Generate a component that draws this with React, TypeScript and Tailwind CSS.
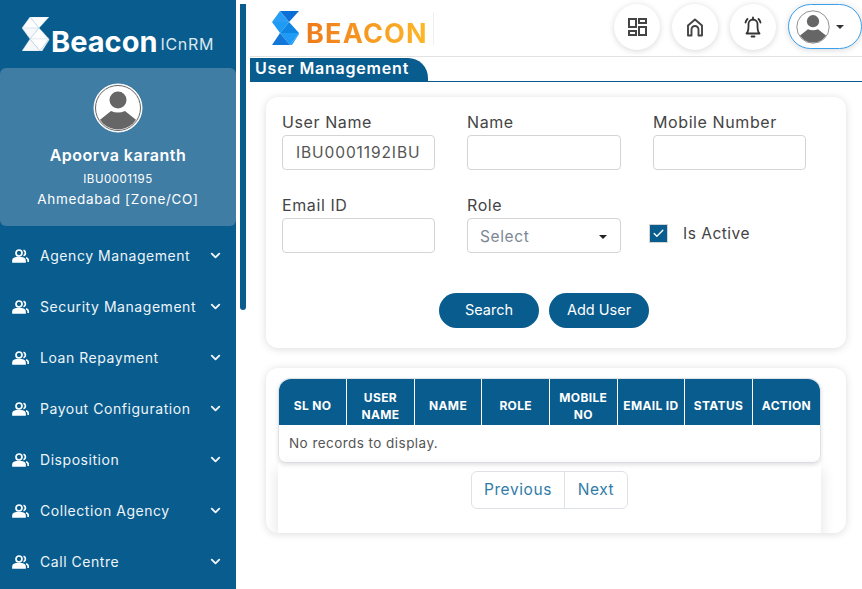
import React from 'react';
import { ChevronDown, Check } from 'lucide-react';

const menuItems = [
  'Agency Management',
  'Security Management',
  'Loan Repayment',
  'Payout Configuration',
  'Disposition',
  'Collection Agency',
  'Call Centre',
];

const columns = ['SL NO', 'USER NAME', 'NAME', 'ROLE', 'MOBILE NO', 'EMAIL ID', 'STATUS', 'ACTION'];

const Avatar = ({ size }: { size: number }) => (
  <svg width={size} height={size} viewBox="0 0 50 50">
    <defs>
      <clipPath id={`avatar-${size}`}>
        <circle cx="25" cy="25" r="21.5" />
      </clipPath>
    </defs>
    <circle cx="25" cy="25" r="24" fill="#fff" stroke="#fff" />
    <circle cx="25" cy="25" r="22.5" fill="#fff" stroke="#666" strokeWidth="1" />
    <g clipPath={`url(#avatar-${size})`}>
      <circle cx="25" cy="17" r="8.5" fill="#666" />
      <path d="M3 40 L18 28 Q25 31 32 28 L47 40 V50 H3 Z" fill="#666" />
    </g>
  </svg>
);

const PeopleIcon = () => (
  <svg width="17" height="14" viewBox="0 0 17 14" fill="none" stroke="#fff" strokeWidth="1.7">
    <circle cx="7" cy="4" r="3" />
    <path d="M11.5 1.2a3 3 0 0 1 0 5.6" />
    <path d="M1 13v-1.5C1 9.5 3 8.6 7 8.6s6 .9 6 2.9V13H1z" fill="#fff" />
    <path d="M14 8.8c1.4.4 2.2 1.2 2.2 2.600V13" />
  </svg>
);

// S shaped mark built from triangles, same shape in the sidebar and the header
const LogoMark = ({ colors, edge }: { colors: string[]; edge?: string }) => (
  <svg width="28" height="34" viewBox="0 0 28 34" className="shrink-0" stroke={edge ?? 'none'} strokeWidth={edge ? 0.4 : 0}>
    <path d="M8 0H27L17 11Z" fill={colors[0]} />
    <path d="M8 0L17 11H0Z" fill={colors[1]} />
    <path d="M0 11H17L8 22Z" fill={colors[2]} />
    <path d="M17 11L27 22H8Z" fill={colors[3]} />
    <path d="M8 22H27L18 34Z" fill={colors[4]} />
    <path d="M8 22L18 34H0Z" fill={colors[5]} />
    <path d="M27 22V23L20 34H18Z" fill={colors[4]} />
  </svg>
);

const Field = ({ label, value, className }: { label: string; value?: string; className?: string }) => (
  <div className={className ?? 'w-[153px]'}>
    <label className="block h-[25px] text-[16px] leading-[25px] tracking-[0.6px] text-[#444]">{label}</label>
    <input
      readOnly
      value={value ?? ''}
      className="block h-[35px] w-full rounded border border-[#d4d4d4] bg-white px-[13px] text-[15.5px] tracking-[0.9px] text-[#555] outline-none"
    />
  </div>
);

const RoundButton = ({ children }: { children: React.ReactNode }) => (
  <div className="flex h-[46px] w-[46px] items-center justify-center rounded-full bg-white shadow-[0_1px_6px_rgba(0,0,0,0.16)]">
    {children}
  </div>
);

export default function App() {
  return (
    <div className="flex h-[589px] w-[862px] overflow-hidden bg-white font-['Inter',sans-serif]">
      <aside className="flex h-full w-[236px] shrink-0 flex-col overflow-hidden bg-[#085c8e] text-white">
        <div className="flex h-[68px] shrink-0 items-center pl-[22px]">
          <LogoMark colors={['#fff', '#fff', '#f4f8fb', '#fff', '#fff', '#f4f8fb']} edge="#c4d8e6" />
          <span className="ml-[1px] mt-[14px] text-[29px] font-bold leading-none">Beacon</span>
          <span className="ml-[3px] mt-[20px] text-[16px] leading-none tracking-[0.7px] text-[#dbe8f0]">ICnRM</span>
        </div>
        <div className="flex h-[158px] shrink-0 flex-col items-center rounded-md bg-[#3f7da5] pt-[15px]">
          <Avatar size={50} />
          <div className="mt-[12px] whitespace-nowrap text-[16px] font-semibold leading-[20px] tracking-[0.5px]">Apoorva karanth</div>
          <div className="mt-[6px] text-[11.5px] leading-[16px] tracking-[0.5px]">IBU0001195</div>
          <div className="mt-[2px] whitespace-nowrap text-[13.5px] leading-[20px] tracking-[0.7px]">Ahmedabad [Zone/CO]</div>
        </div>
        <nav className="mt-[4px] flex flex-col">
          {menuItems.map((item) => (
            <div key={item} className="flex h-[51px] shrink-0 items-center pl-[12px] pr-[13px] text-[14px] tracking-[0.55px] text-[#eef4f8]">
              <PeopleIcon />
              <span className="ml-[11px] flex-1 whitespace-nowrap">{item}</span>
              <ChevronDown size={15} strokeWidth={3} />
            </div>
          ))}
        </nav>
      </aside>

      <div className="flex w-[14px] shrink-0 justify-center pt-[4px]">
        <div className="ml-[-1px] h-[306px] w-[6px] rounded-b bg-[#085c8e]" />
      </div>

      <main className="flex min-w-0 flex-1 flex-col">
        <header className="flex h-[57px] shrink-0 items-center border-b border-[#e2e2e2] pl-[22px]">
          <LogoMark colors={['#0b6fd6', '#2a9df4', '#1e9bf5', '#0f86e4', '#1e9bf5', '#1277d8']} />
          <span className="ml-[6px] mt-[10px] bg-gradient-to-r from-[#ee7a1c] to-[#fdb827] bg-clip-text text-[27px] font-bold leading-none tracking-[1.2px] text-transparent">
            BEACON
          </span>
          <div className="ml-[5px] h-[33px] w-px bg-[#efefef]" />
          <div className="ml-auto flex items-center gap-[12px] pb-[3px]">
            <RoundButton>
              <svg width="20" height="18" viewBox="0 0 20 18" fill="none" stroke="#444" strokeWidth="2">
                <path d="M2 1h7v8H2zM12 1h7v4h-7zM2 13h7v4H2zM12 9h7v8h-7z" />
              </svg>
            </RoundButton>
            <RoundButton>
              <svg width="24" height="24" viewBox="0 0 24 24" fill="none" stroke="#444" strokeWidth="1.9" strokeLinejoin="round">
                <path d="M5 20.500V10.500L12 4.500l7 6v10h-3.500v-6a3.500 3.500 0 0 0-7 0v6H5z" />
              </svg>
            </RoundButton>
            <RoundButton>
              <svg width="24" height="24" viewBox="0 0 24 24" fill="none" stroke="#333" strokeWidth="1.8" strokeLinecap="round" strokeLinejoin="round">
                <path d="M5.500 18.500h13c-1.800-1.500-2-4-2-7.500V9a4.500 4.500 0 0 0-9 0v2c0 3.500-.2 6-2 7.500z" />
                <path d="M12 2.500v2M10.500 21.500h3" />
                <path d="M4.500 7.500c.3-1.500 1-2.500 2-3.500M19.500 7.500c-.3-1.500-1-2.500-2-3.500" />
              </svg>
            </RoundButton>
            <div className="flex h-[45px] w-[74px] items-center rounded-[23px] border border-[#3aa0f0] bg-white pl-[6px] shadow-[0_1px_6px_rgba(0,0,0,0.16)]">
              <Avatar size={36} />
              <span className="ml-[5px] h-0 w-0 border-x-[4px] border-t-[4px] border-x-transparent border-t-[#333]" />
            </div>
          </div>
        </header>

        <div className="mt-[1px] flex h-[24px] shrink-0 border-b border-[#085c8e]">
          <div className="flex h-full w-[178px] items-center whitespace-nowrap rounded-tr-[20px] bg-[#085c8e] pb-[3px] pl-[5px] text-[16px] font-semibold leading-none tracking-[0.8px] text-white">
            User Management
          </div>
        </div>

        <div className="flex flex-col gap-[20px] px-[16px] pt-[15px]">
          <section className="h-[251px] rounded-xl bg-white pl-[16px] pt-[13px] shadow-[0_1px_9px_rgba(0,0,0,0.14)]">
            <div className="flex gap-[32px]">
              <Field label="User Name" value="IBU0001192IBU" />
              <Field label="Name" className="w-[154px]" />
              <Field label="Mobile Number" />
            </div>
            <div className="mt-[23px] flex gap-[32px]">
              <Field label="Email ID" />
              <div className="w-[154px]">
                <label className="block h-[25px] text-[16px] leading-[25px] tracking-[0.6px] text-[#444]">Role</label>
                <div className="flex h-[35px] items-center justify-between rounded border border-[#d4d4d4] pl-[12px] pr-[13px] pt-[2px] text-[15.5px] tracking-[0.6px] text-[#7b8794]">
                  Select
                  <span className="h-0 w-0 border-x-[4px] border-t-[4px] border-x-transparent border-t-[#222]" />
                </div>
              </div>
              <div className="ml-[-4px] flex items-center pt-[21px]">
                <div className="flex h-[19px] w-[19px] items-center justify-center border border-[#d4d4d4] bg-[#085c8e] text-white">
                  <Check size={13} strokeWidth={2.5} />
                </div>
                <span className="ml-[15px] text-[15.5px] tracking-[0.5px] text-[#444]">Is Active</span>
              </div>
            </div>
            <div className="mt-[40px] flex justify-center gap-[10px] pr-[40px]">
              <button className="h-[35px] w-[100px] rounded-[18px] bg-[#085c8e] pb-[1px] text-[14.5px] text-white">Search</button>
              <button className="h-[35px] w-[100px] rounded-[18px] bg-[#085c8e] pb-[1px] text-[14.5px] text-white">Add User</button>
            </div>
          </section>

          <section className="h-[165px] overflow-hidden rounded-xl bg-white pl-[12px] pr-[25px] pt-[10px] shadow-[0_1px_9px_rgba(0,0,0,0.14)]">
            <div className="rounded-b-lg rounded-t-xl border border-[#dee2e6] shadow-[0_2px_4px_rgba(0,0,0,0.12)]">
              <table className="w-full table-fixed border-collapse">
                <thead>
                  <tr className="h-[46px] bg-[#085c8e]">
                    {columns.map((c, i) => (
                      <th
                        key={c}
                        className={`border-l border-white px-[2px] pt-[8px] align-middle text-[12px] font-bold leading-[17.5px] tracking-[0.35px] text-white first:border-l-0 ${
                          i === 0 ? 'rounded-tl-xl' : i === 7 ? 'rounded-tr-xl' : ''
                        }`}
                      >
                        {c}
                      </th>
                    ))}
                  </tr>
                </thead>
                <tbody>
                  <tr>
                    <td colSpan={8} className="h-[37px] pl-[10px] text-[13.5px] tracking-[0.45px] text-[#555]">
                      No records to display.
                    </td>
                  </tr>
                </tbody>
              </table>
            </div>
            <div className="flex h-[70px] justify-center pt-[8px] shadow-[0_6px_14px_rgba(0,0,0,0.12)]">
              <div className="flex h-[38px] overflow-hidden rounded-md border border-[#dee2e6] text-[15.5px] tracking-[0.6px] text-[#2f7ba8]">
                <span className="flex w-[93px] items-center justify-center border-r border-[#dee2e6]">Previous</span>
                <span className="flex w-[62px] items-center justify-center">Next</span>
              </div>
            </div>
          </section>
        </div>
      </main>
    </div>
  );
}
